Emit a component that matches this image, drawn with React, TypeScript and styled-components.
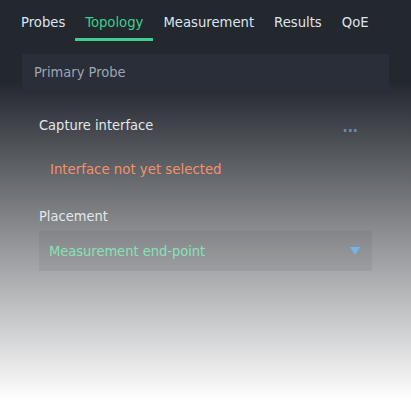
import React from "react";
import styled, { createGlobalStyle } from "styled-components";

const Global = createGlobalStyle`
  html, body { margin: 0; padding: 0; }
  body {
    font-family: "DejaVu Sans Condensed", "DejaVu Sans", sans-serif;
  }
`;

const Page = styled.div`
  width: 411px;
  height: 403px;
  overflow: hidden;
  background: linear-gradient(180deg, #23272e 0px, #23272e 82px, #ffffff 400px);
  display: flex;
  flex-direction: column;
`;

const Tabs = styled.nav`
  display: flex;
  padding: 0 0 0 11px;
  height: 41px;
`;

const Tab = styled.div<{ $active?: boolean }>`
  padding: 13px 10px 0;
  font-size: 14.7px;
  color: ${(p) => (p.$active ? "#3ecf8e" : "#dbe5ee")};
  border-bottom: 3px solid ${(p) => (p.$active ? "#3ecf8e" : "transparent")};
  box-sizing: border-box;
  height: 41px;
`;

const Header = styled.div`
  margin: 13px 22px 0 22px;
  height: 36px;
  background: #2a2e39;
  display: flex;
  align-items: center;
  padding-left: 12px;
  font-size: 14.5px;
  color: #9ca6b2;
`;

const Body = styled.div`
  padding: 0 39px;
  display: flex;
  flex-direction: column;
`;

const FieldRow = styled.div`
  display: flex;
  justify-content: space-between;
  align-items: center;
  margin-top: 26px;
  height: 18px;
  padding-right: 14px;
`;

const Label = styled.div`
  font-size: 14.5px;
  color: #e2e8ec;
`;

const Dots = styled.span`
  font-size: 15px;
  font-weight: bold;
  color: #6b8cab;
  padding-top: 4px;
`;

const Warning = styled.div`
  margin-top: 26px;
  margin-left: 11px;
  font-size: 14.8px;
  color: #f2926b;
`;

const PlacementLabel = styled(Label)`
  margin-top: 31px;
`;

const Select = styled.div`
  margin-top: 7px;
  height: 40px;
  background: rgba(0, 0, 0, 0.05);
  display: flex;
  align-items: center;
  justify-content: space-between;
  padding: 0 12px 0 10px;
  font-size: 14.5px;
  color: #86e3b7;
`;

const Arrow = styled.svg`
  width: 10px;
  height: 8px;
`;

export default function App() {
  return (
    <Page>
      <Global />
      <Tabs>
        <Tab>Probes</Tab>
        <Tab $active>Topology</Tab>
        <Tab>Measurement</Tab>
        <Tab>Results</Tab>
        <Tab>QoE</Tab>
      </Tabs>
      <Header>Primary Probe</Header>
      <Body>
        <FieldRow>
          <Label>Capture interface</Label>
          <Dots>...</Dots>
        </FieldRow>
        <Warning>Interface not yet selected</Warning>
        <PlacementLabel>Placement</PlacementLabel>
        <Select>
          <span>Measurement end-point</span>
          <Arrow viewBox="0 0 10 8">
            <polygon points="0,0 10,0 5,8" fill="#6fb6ee" />
          </Arrow>
        </Select>
      </Body>
    </Page>
  );
}
